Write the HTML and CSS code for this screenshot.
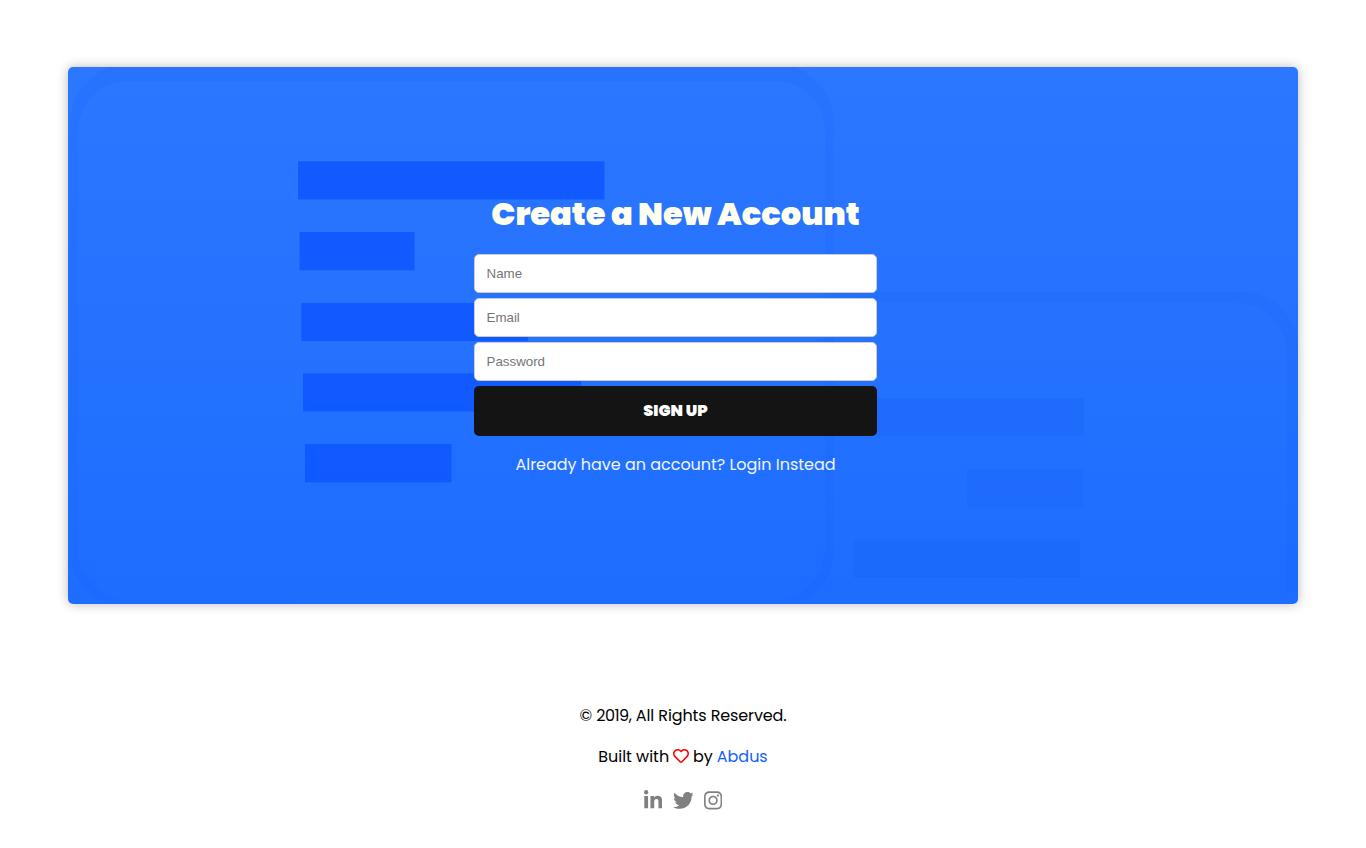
FILE: index.html
```html
<!DOCTYPE html>
<html lang="en">
<head>
<meta charset="utf-8">
<title>Create a New Account</title>
<link rel="stylesheet" href="styles.css">
</head>
<body>
<main class="card">
  <svg class="card-art" viewBox="0 0 1230 537" aria-hidden="true">
    <g class="frame">
      <path fill-rule="evenodd" d="M62 -3H706A60 60 0 0 1 766 57V482A60 60 0 0 1 706 542H62A60 60 0 0 1 2 482V57A60 60 0 0 1 62 -3ZM60 14A50 50 0 0 0 10 64V483A50 50 0 0 0 60 533H230V537H331V533H707A50 50 0 0 0 757 483V64A50 50 0 0 0 707 14Z"/>
      <path d="M766 225H1174A56 56 0 0 1 1230 281V525H1219V286A50 50 0 0 0 1169 236H766Z"/>
    </g>
    <path class="replies" d="M800 331H1016V369H800ZM899 402H1014.500V440.500H899ZM785.500 472.500H1012V511H785.500Z"/>
    <path class="lines" d="M230 94.300H536.400V132.500H230ZM231.600 165H346.600V203.300H231.600ZM233.300 236H460V274H233.300ZM235 306.400H513V344.600H235ZM237 377H383.500V415.300H237Z"/>
  </svg>
  <form class="signup">
    <h1 class="title">Create a New Account</h1>
    <input class="field" type="text" placeholder="Name">
    <input class="field" type="email" placeholder="Email">
    <input class="field" type="password" placeholder="Password">
    <button class="submit" type="button">SIGN UP</button>
    <a class="switch">Already have an account? Login Instead</a>
  </form>
</main>
<footer class="footer">
  <p class="copyright">© <span class="year">2019</span>, All Rights Reserved.</p>
  <p class="credit"><span class="built">Built with</span><svg class="heart" viewBox="0 0 512 512"><path d="M458.400 64.300C400.600 15.700 311.300 23 256 79.300 200.700 23 111.400 15.600 53.600 64.300-21.600 127.600-10.600 230.800 43 285.500l175.400 178.700c10 10.200 23.400 15.900 37.600 15.900 14.300 0 27.600-5.600 37.600-15.800L469 285.600c53.500-54.700 64.700-157.900-10.600-221.300zm-23.600 187.500L259.400 430.500c-2.400 2.400-4.400 2.400-6.800 0L77.200 251.800c-36.500-37.200-43.900-107.600 7.300-150.700 38.900-32.700 98.900-27.800 136.500 10.500l35 35.700 35-35.700c37.800-38.500 97.800-43.200 136.500-10.600 51.100 43.100 43.500 113.900 7.300 150.800z"/></svg><span class="by">by</span><a class="author">Abdus</a></p>
  <div class="social">
    <svg class="in" viewBox="0 0 448 512"><path d="M100.280 448H7.400V148.900h92.880zM53.790 108.100C24.090 108.100 0 83.500 0 53.800a53.790 53.790 0 0 1 107.580 0c0 29.700-24.100 54.300-53.790 54.300zM447.900 448h-92.680V302.400c0-34.700-.7-79.200-48.290-79.200-48.290 0-55.690 37.700-55.690 76.700V448h-92.780V148.900h89.080v40.800h1.300c12.400-23.500 42.690-48.300 87.880-48.300 94 0 111.280 61.900 111.280 142.300V448z"/></svg>
    <svg class="tw" viewBox="0 0 512 512"><path d="M459.370 151.716c.325 4.548.325 9.097.325 13.645 0 138.720-105.583 298.558-298.558 298.558-59.452 0-114.680-17.219-161.137-47.106 8.447.974 16.568 1.299 25.340 1.299 49.055 0 94.213-16.568 130.274-44.832-46.132-.975-84.792-31.188-98.112-72.772 6.498.974 12.995 1.624 19.818 1.624 9.421 0 18.843-1.300 27.614-3.573-48.081-9.747-84.143-51.980-84.143-102.985v-1.299c13.969 7.797 30.214 12.670 47.431 13.319-28.264-18.843-46.781-51.005-46.781-87.391 0-19.492 5.197-37.360 14.294-52.954 51.655 63.675 129.300 105.258 216.365 109.807-1.624-7.797-2.599-15.918-2.599-24.040 0-57.828 46.782-104.934 104.934-104.934 30.213 0 57.502 12.670 76.670 33.137 23.715-4.548 46.456-13.320 66.599-25.340-7.798 24.366-24.366 44.833-46.132 57.827 21.117-2.273 41.584-8.122 60.426-16.243-14.292 20.791-32.161 39.308-52.628 54.253z"/></svg>
    <svg class="ig" viewBox="0 0 448 512"><path d="M224.100 141c-63.600 0-114.900 51.300-114.900 114.900s51.300 114.900 114.900 114.900S339 319.500 339 255.900 287.700 141 224.100 141zm0 189.600c-41.100 0-74.700-33.500-74.700-74.700s33.500-74.700 74.700-74.700 74.700 33.500 74.700 74.700-33.600 74.700-74.700 74.700zm146.400-194.300c0 14.900-12 26.800-26.800 26.800-14.900 0-26.800-12-26.800-26.800s12-26.800 26.800-26.800 26.800 12 26.800 26.800zm76.100 27.200c-1.700-35.900-9.900-67.700-36.200-93.900-26.200-26.200-58-34.400-93.900-36.200-37-2.100-147.900-2.100-184.900 0-35.800 1.700-67.600 9.900-93.900 36.100s-34.400 58-36.200 93.900c-2.100 37-2.100 147.900 0 184.900 1.700 35.900 9.900 67.700 36.200 93.900s58 34.400 93.900 36.200c37 2.100 147.900 2.100 184.900 0 35.900-1.700 67.700-9.900 93.900-36.200 26.200-26.200 34.400-58 36.200-93.900 2.100-37 2.100-147.800 0-184.800zM398.800 388c-7.800 19.600-22.900 34.700-42.600 42.600-29.500 11.700-99.500 9-132.100 9s-102.700 2.600-132.100-9c-19.600-7.800-34.700-22.900-42.600-42.600-11.700-29.500-9-99.500-9-132.100s-2.600-102.700 9-132.100c7.800-19.600 22.900-34.700 42.600-42.600 29.500-11.700 99.500-9 132.100-9s102.700-2.600 132.100 9c19.600 7.800 34.700 22.900 42.600 42.600 11.700 29.500 9 99.500 9 132.100s2.700 102.700-9 132.100z"/></svg>
  </div>
</footer>
</body>
</html>
```
FILE: styles.css
```css
* { box-sizing: border-box; }
body {
  margin: 0;
  padding: 67px 68px 0;
  background: #fff;
  color: #000;
  font: 16px/24px Poppins, Inter, sans-serif;
}
.card {
  position: relative;
  display: flex;
  justify-content: center;
  height: 537px;
  padding: 122px 15px 0 0;
  border-radius: 5px;
  background: linear-gradient(#2c77ff, #1e6dff);
  box-shadow: 0 0 12px rgba(0, 0, 0, .27);
}
/* Decorative windows behind the form */
.card-art {
  position: absolute;
  inset: 0;
  width: 100%;
  height: 100%;
  border-radius: 5px;
}
.frame { fill: rgba(16, 92, 245, .12); }
.replies { fill: rgba(16, 86, 240, .18); }
.lines { fill: rgba(14, 86, 255, .88); }
.signup {
  position: relative;
  display: flex;
  flex-direction: column;
  gap: 5px;
  width: 403px;
}
.title {
  margin: 0 0 10px;
  height: 50px;
  color: #fffff0;
  font-size: 32px;
  font-weight: 900;
  line-height: 50px;
  text-align: center;
  white-space: nowrap;
}
.field {
  height: 39px;
  padding: 0 11.500px;
  border: 1px solid #ccc;
  border-radius: 5px;
  background: #fff;
  font: 13.333px "Liberation Sans", Arial, sans-serif;
}
.field::placeholder { color: #757575; }
.submit {
  height: 50px;
  padding: 0;
  border: 0;
  border-radius: 5px;
  background: #141414;
  color: #fff;
  font: 900 16px/50px Poppins, Inter, sans-serif;
}
.switch {
  margin-top: 12px;
  color: #f0f6ff;
  letter-spacing: -.02px;
  text-align: center;
  white-space: nowrap;
}
.footer {
  display: flex;
  flex-direction: column;
  align-items: center;
  padding-top: 100px;
}
.copyright {
  margin: 0 0 17px;
  letter-spacing: -.12px;
}
.year { letter-spacing: -.5px; }
.credit {
  display: flex;
  align-items: center;
  gap: 4px;
  margin: 0 0 21px;
  letter-spacing: -.04px;
}
.heart { width: 16px; height: 16px; margin-bottom: 2px; fill: #f00; }
.author { color: #125eff; }
.social {
  display: flex;
  gap: 10.300px;
  height: 21px;
  fill: #808080;
}
.in, .ig { width: 18.200px; height: 20.800px; }
.tw { width: 20.800px; height: 20.800px; }
```
